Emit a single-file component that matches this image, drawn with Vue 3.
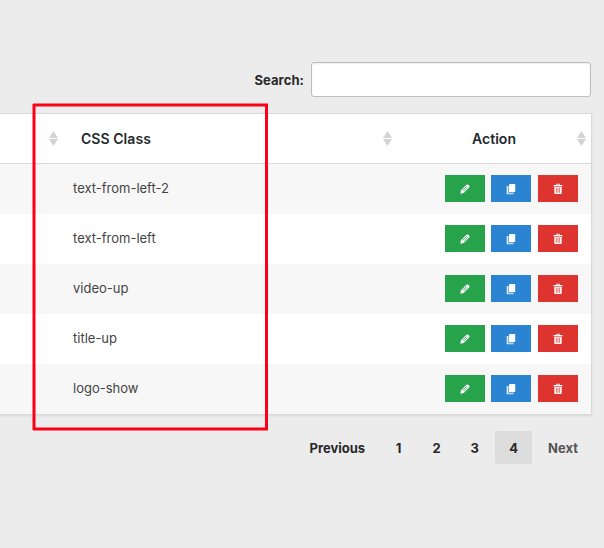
<script setup>
const classes = ['text-from-left-2', 'text-from-left', 'video-up', 'title-up', 'logo-show']
const pages = [1, 2, 3, 4]
const current = 4
</script>

<template>
  <main class="page">
    <div class="search">
      <label for="search">Search:</label>
      <input id="search" type="text" />
    </div>
    <div class="table">
      <div class="row head">
        <div class="th"><i class="sort"></i></div>
        <div class="th"><span class="title">CSS Class</span><i class="sort"></i></div>
        <div class="th center"><span class="title">Action</span><i class="sort"></i></div>
      </div>
      <div v-for="name in classes" :key="name" class="row body">
        <div></div>
        <div class="name">{{ name }}</div>
        <div class="actions">
          <button class="btn edit" aria-label="Edit">
            <svg width="12" height="12" viewBox="0 0 12 12">
              <path d="M1.3 10.7 2 7.2 7.4 1.8Q8.3 1 9.2 1.8L10.2 2.8Q11 3.7 10.2 4.6L4.8 10Z" fill="#fff" />
              <path d="M3.6 7.4 7.4 3.6M4.9 8.4 8.5 4.8" stroke="#27a34c" stroke-width=".75" />
            </svg>
          </button>
          <button class="btn copy" aria-label="Copy">
            <svg width="12" height="12" viewBox="0 0 12 12">
              <path d="M1.7 3h1.3v7.2H8.5v1H1.7Z" fill="#fff" fill-opacity=".85" />
              <path d="M3 3H4v6.2h5V10.2H3Z" fill="#fff" fill-opacity=".35" />
              <path d="M4.7 1H10.2V9H4V1.7Z" fill="#fff" />
            </svg>
          </button>
          <button class="btn remove" aria-label="Delete">
            <svg width="12" height="12" viewBox="0 0 12 12">
              <path d="M4.5 2V1.2h3V2" fill="none" stroke="#fff" stroke-width=".8" />
              <path d="M1.6 2h8.8v1.4H1.6Z" fill="#fff" />
              <path d="M2.3 4h7.4v6.3q0 .8-.8.8H3.1q-.8 0-.8-.8Z" fill="#fff" />
              <path d="M4.35 4.6v5.2M6 4.6v5.2M7.65 4.6v5.2" stroke="#de342f" stroke-width=".7" />
            </svg>
          </button>
        </div>
      </div>
    </div>
    <nav class="pager">
      <a class="prev">Previous</a>
      <a v-for="p in pages" :key="p" class="num" :class="{ current: p === current }">{{ p }}</a>
      <a class="next">Next</a>
    </nav>
    <div class="highlight"></div>
  </main>
</template>

<style>
body { background: #ececec; }
</style>

<style scoped>
.page {
  position: relative;
  box-sizing: border-box;
  width: 604px;
  height: 548px;
  padding: 62px 12px 0 0;
  background: #ececec;
  color: #292929;
  font: 13px/20px Inter, "Liberation Sans", sans-serif;
  overflow: hidden;
}
.search {
  display: flex;
  justify-content: flex-end;
  align-items: center;
  gap: 7px;
  padding-right: 1px;
  font-weight: 700;
}
.search label {
  padding-top: 1px;
  letter-spacing: .08px;
}
.search input {
  box-sizing: border-box;
  width: 280px;
  height: 35px;
  margin: 0;
  border: 1px solid #bdbdbd;
  border-radius: 3px;
  background: #fff;
  box-shadow: inset 0 1px 2px rgba(0, 0, 0, .07);
  outline: 0;
}
.table {
  margin-top: 16px;
  border: solid #d9d9d9;
  border-width: 1px 1px 1px 0;
  background: #fff;
  box-shadow: 0 1px 2px rgba(0, 0, 0, .08);
}
.row {
  display: grid;
  grid-template-columns: 63px 334px 194px;
  align-items: center;
}
.head {
  height: 49px;
  border-bottom: 1px solid #d9d9d9;
  color: #23282d;
  font-size: 14px;
  font-weight: 600;
  letter-spacing: .05px;
}
.th {
  display: grid;
  grid-template-columns: 1fr 9px;
  align-items: center;
  padding: 0 5px 0 18px;
}
.th .title { grid-column: 1; }
.center { padding-left: 14px; text-align: center; }
.sort {
  grid-column: 2;
  display: grid;
  gap: 1px;
}
.sort::before,
.sort::after {
  content: "";
  height: 7px;
  background: #d3d3d3;
  clip-path: polygon(50% 0, 100% 100%, 0 100%);
}
.sort::after { clip-path: polygon(0 0, 100% 0, 50% 100%); }
.body {
  box-sizing: border-box;
  height: 50px;
  padding-bottom: 1px;
  color: #444;
}
.body:nth-child(even) { background: #f7f7f7; }
.name { padding: 0 0 2px 10px; }
.actions {
  display: flex;
  padding-left: 48px;
}
.btn {
  display: flex;
  align-items: center;
  justify-content: center;
  width: 40px;
  height: 27px;
  padding: 0;
  border: 0;
}
.edit { background: #27a34c; }
.copy { margin: 0 7px 0 6px; background: #2a84d2; }
.remove { background: #de342f; }
.pager {
  display: flex;
  justify-content: flex-end;
  gap: 2px;
  margin-top: 16px;
  font-weight: 700;
}
.pager a {
  box-sizing: border-box;
  height: 33px;
  padding: 7px 14px;
  border-radius: 2px;
  text-align: center;
}
.pager .num { width: 36px; }
.pager .num:not(.current) { padding: 7px 14.5px 7px 13.5px; }
.pager .current { width: 37px; background: #dcdcdc; }
.pager .next { color: #555; }
.highlight {
  position: absolute;
  left: 33px;
  top: 104px;
  box-sizing: border-box;
  width: 235px;
  height: 326px;
  border: 2px solid #fb0019;
  border-right-width: 3px;
  box-shadow:
    -1px 0 rgba(251, 0, 25, .5),
    0 -1px rgba(251, 0, 25, .5),
    0 1px rgba(251, 0, 25, .5),
    inset 1px 0 rgba(251, 0, 25, .5),
    inset 0 1px rgba(251, 0, 25, .5),
    inset 0 -1px rgba(251, 0, 25, .5);
}
</style>
